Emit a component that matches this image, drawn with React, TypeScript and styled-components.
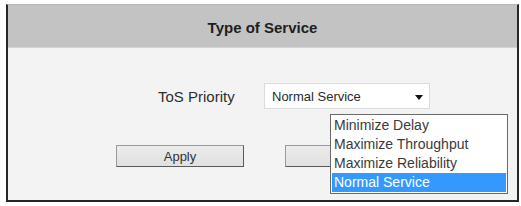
import React from "react";
import styled, { createGlobalStyle } from "styled-components";

const Global = createGlobalStyle`
  html, body { margin: 0; padding: 0; background: #ffffff; }
  body { font-family: "Liberation Sans", Arial, sans-serif; }
`;

const Page = styled.div`
  width: 521px;
  height: 206px;
  padding: 4px 0 0 6px;
  box-sizing: border-box;
`;

const Panel = styled.div`
  width: 513px;
  height: 198px;
  box-sizing: border-box;
  border-top: 1px solid #b8b8b8;
  border-left: 2px solid #262626;
  border-right: 2px solid #262626;
  border-bottom: 2px solid #262626;
  display: flex;
  flex-direction: column;
`;

const Header = styled.div`
  height: 43px;
  flex: none;
  box-sizing: border-box;
  padding-top: 2px;
  background: #c3c3c3;
  display: flex;
  align-items: center;
  justify-content: center;
  font-weight: bold;
  font-size: 15px;
  color: #1e1e1e;
  border-bottom: 1px solid #d4d4d4;
`;

const Body = styled.div`
  flex: 1;
  background: #f3f3f3;
  display: flex;
  flex-direction: column;
  padding-top: 35px;
  gap: 36px;
`;

const FieldRow = styled.div`
  display: flex;
  align-items: center;
  padding-left: 150px;
  gap: 26px;
`;

const Label = styled.span`
  font-size: 15px;
  color: #2e2e2e;
  width: 80px;
  white-space: nowrap;
`;

const SelectWrap = styled.div`
  position: relative;
`;

const SelectBox = styled.div`
  width: 166px;
  height: 26px;
  box-sizing: border-box;
  background: #ffffff;
  border: 1px solid #dcdcdc;
  display: flex;
  align-items: center;
  justify-content: space-between;
  padding: 0 6px 0 7px;
  font-size: 13px;
  color: #2a2a2a;
`;

const Arrow = styled.span`
  width: 0;
  height: 0;
  border-left: 4px solid transparent;
  border-right: 4px solid transparent;
  border-top: 5px solid #111;
  margin-top: 2px;
`;

const List = styled.ul`
  position: absolute;
  left: 66px;
  top: 31px;
  width: 178px;
  margin: 0;
  padding: 1px;
  list-style: none;
  background: #ffffff;
  border: 1px solid #6a6a6a;
  box-sizing: border-box;
  z-index: 2;
`;

const Item = styled.li<{ $active?: boolean }>`
  height: 19px;
  line-height: 19px;
  padding-left: 2px;
  font-size: 14px;
  color: ${(p) => (p.$active ? "#ffffff" : "#3a3a3a")};
  background: ${(p) => (p.$active ? "#3399ff" : "transparent")};
  white-space: nowrap;
`;

const ButtonRow = styled.div`
  display: flex;
  padding-left: 108px;
  gap: 41px;
`;

const Button = styled.button`
  width: 128px;
  height: 22px;
  box-sizing: border-box;
  margin: 0;
  padding: 0;
  font-family: "Liberation Sans", Arial, sans-serif;
  font-size: 13px;
  color: #333;
  background: linear-gradient(#ececec, #e0e0e0);
  border: 1px solid #9a9a9a;
  border-right-color: #5a5a5a;
  border-bottom-color: #5a5a5a;
  border-radius: 0;
`;

export default function App() {
  const options = [
    "Minimize Delay",
    "Maximize Throughput",
    "Maximize Reliability",
    "Normal Service",
  ];
  return (
    <>
      <Global />
      <Page>
        <Panel>
          <Header>Type of Service</Header>
          <Body>
            <FieldRow>
              <Label>ToS Priority</Label>
              <SelectWrap>
                <SelectBox>
                  <span>Normal Service</span>
                  <Arrow />
                </SelectBox>
                <List>
                  {options.map((o) => (
                    <Item key={o} $active={o === "Normal Service"}>
                      {o}
                    </Item>
                  ))}
                </List>
              </SelectWrap>
            </FieldRow>
            <ButtonRow>
              <Button>Apply</Button>
              <Button aria-label="Cancel" />
            </ButtonRow>
          </Body>
        </Panel>
      </Page>
    </>
  );
}
